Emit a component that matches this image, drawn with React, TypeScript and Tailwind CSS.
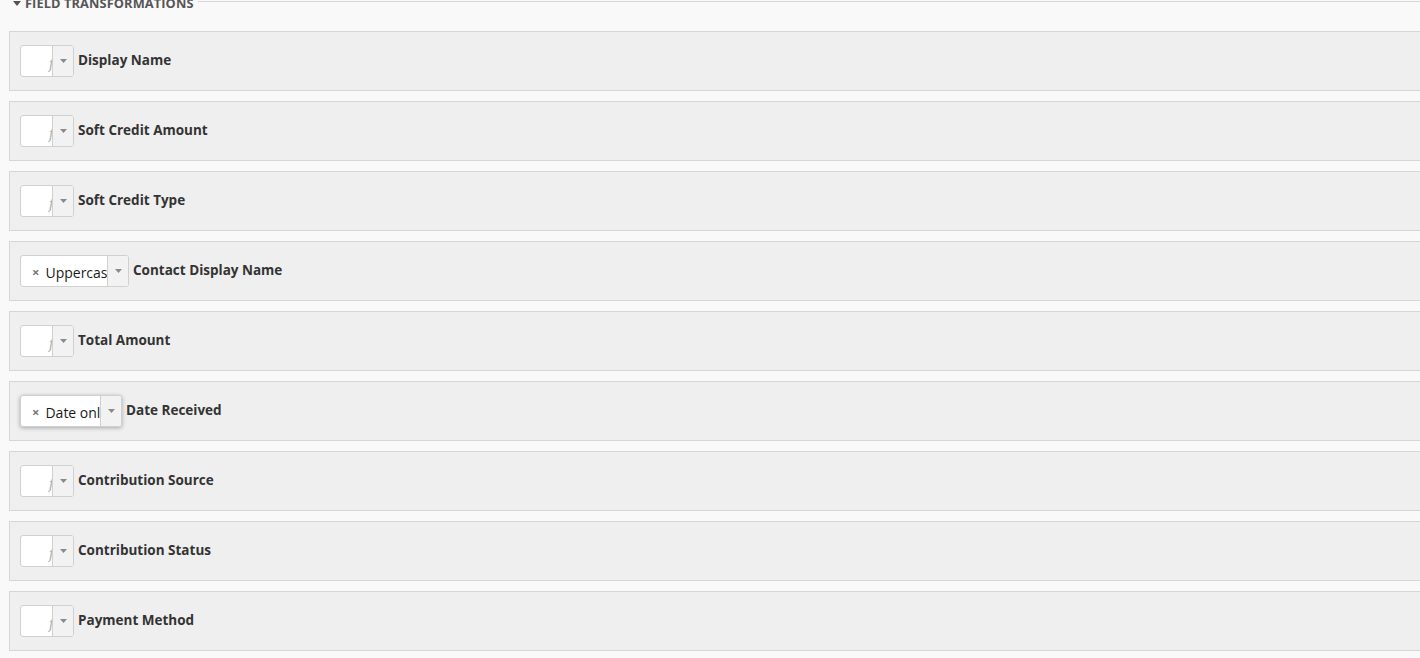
type Row = { label: string; value?: string; focused?: boolean };

const rows: Row[] = [
  { label: "Display Name" },
  { label: "Soft Credit Amount" },
  { label: "Soft Credit Type" },
  { label: "Contact Display Name", value: "Uppercase" },
  { label: "Total Amount" },
  { label: "Date Received", value: "Date only", focused: true },
  { label: "Contribution Source" },
  { label: "Contribution Status" },
  { label: "Payment Method" },
];

function TransformSelect({ value, focused }: { value?: string; focused?: boolean }) {
  return (
    <div
      className={
        "flex h-[32px] shrink-0 overflow-hidden rounded-[3px] border border-[#d0d0d0] bg-white " +
        (focused ? "shadow-[0_1px_4px_rgba(0,0,0,0.3)]" : "")
      }
    >
      {value ? (
        <div className={"flex items-center overflow-hidden whitespace-nowrap pl-[11px] pt-[3px] " + (focused ? "w-[79px]" : "w-[86px]")}>
          <span className="mr-[6px] text-[13px] font-bold text-[#777]">×</span>
          <span className="text-[14px] text-[#1a1a1a]">{value}</span>
        </div>
      ) : (
        <div className="relative w-[31px] overflow-hidden">
          <span className="absolute right-[-2px] top-[8px] font-['DejaVu_Serif',serif] text-[14px] italic text-[#b0b0b0]">
            f
          </span>
        </div>
      )}
      <div className="flex w-[21px] items-center justify-center border-l border-[#d0d0d0] bg-[#f2f2f2]">
        <svg width="7" height="4" viewBox="0 0 7 4">
          <path d="M0 0 L7 0 L3.5 4 Z" fill="#8a8a8a" />
        </svg>
      </div>
    </div>
  );
}

export default function App() {
  return (
    <div className="min-h-[658px] w-[1420px] overflow-hidden bg-[#f9f9f9] font-['Open_Sans',sans-serif]">
      {/* section header, scrolled so its top is cut off */}
      <div className="flex h-[31px] items-start">
        <div className="-mt-[4px] ml-[11px] flex items-center gap-[4px] px-[2px] text-[12.8px] font-bold uppercase leading-[14px] tracking-[0.1px] text-[#555]">
          <svg width="8" height="5" viewBox="0 0 8 5">
            <path d="M0 0 L8 0 L4 5 Z" fill="#555" />
          </svg>
          Field Transformations
        </div>
        <div className="ml-[2px] mt-[1px] h-px flex-1 bg-[#d6d6d6]" />
      </div>
      <div className="flex flex-col gap-[10px] pl-[9px]">
        {rows.map((r) => (
          <div
            key={r.label}
            className="-mr-[4px] flex h-[60px] items-center gap-[4px] border border-[#d6d6d6] bg-[#efefef] px-[10px]"
          >
            <TransformSelect value={r.value} focused={r.focused} />
            <span className="pb-[2px] text-[13.5px] font-bold text-[#333]">{r.label}</span>
          </div>
        ))}
      </div>
    </div>
  );
}
